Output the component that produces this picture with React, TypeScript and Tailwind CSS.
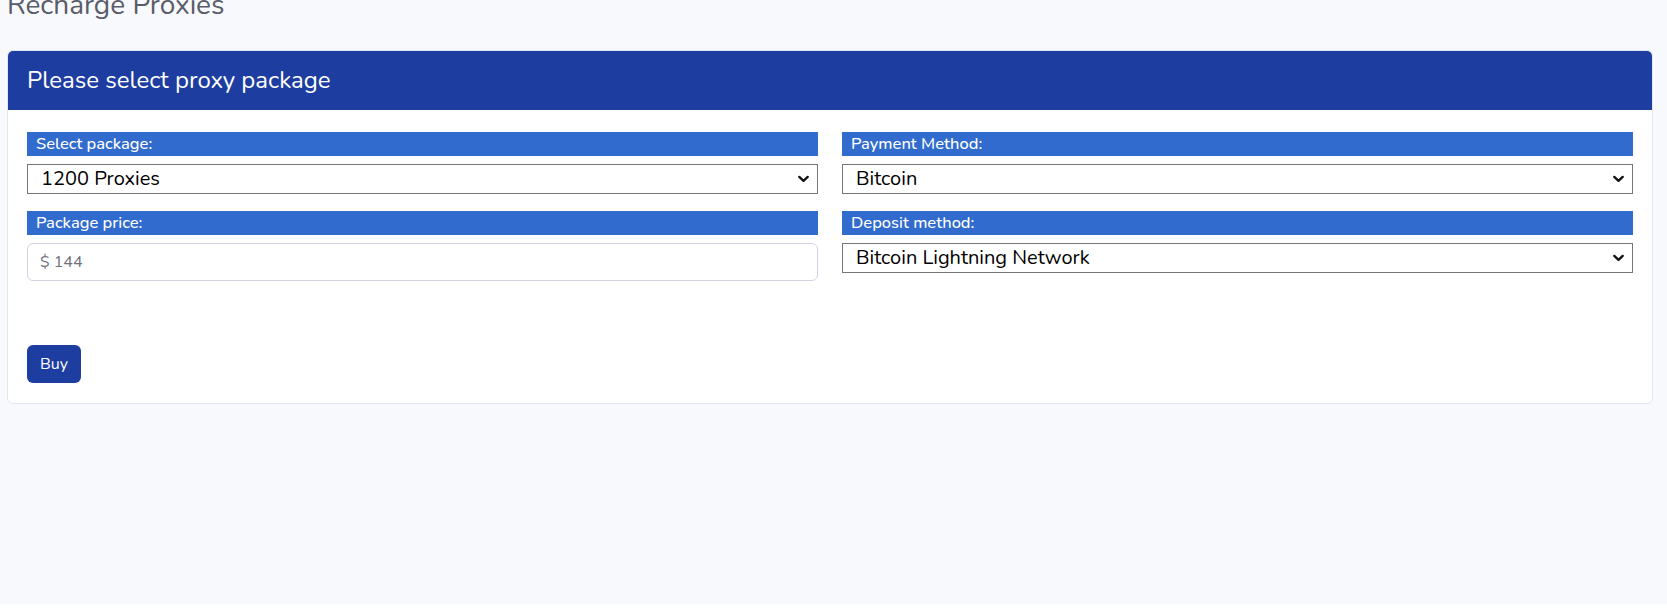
import React, { useState } from 'react';

const packages = ['100 Proxies', '300 Proxies', '600 Proxies', '1200 Proxies', '2500 Proxies'];
const payments = ['Bitcoin', 'Ethereum', 'USDT'];
const deposits = ['Bitcoin Lightning Network', 'Bitcoin On-chain'];

const Chevron: React.FC = () => (
  <svg
    className="pointer-events-none absolute right-[9px] top-1/2 -translate-y-1/2"
    width="11"
    height="7"
    viewBox="0 0 11 7"
    fill="none"
  >
    <path d="M1.3 1.3 5.5 5.3l4.2-4" stroke="#111" strokeWidth="2.3" strokeLinecap="round" strokeLinejoin="round" />
  </svg>
);

const FieldLabel: React.FC<{ children: React.ReactNode }> = ({ children }) => (
  <div className="h-[24px] bg-[#306bcd] px-[9px] text-[16.5px] font-medium leading-[24px] text-white">{children}</div>
);

const Select: React.FC<{ value: string; options: string[]; onChange: (v: string) => void }> = ({ value, options, onChange }) => (
  <div className="relative mt-[8px]">
    <select
      value={value}
      onChange={e => onChange(e.target.value)}
      className="block h-[30px] w-full appearance-none border border-[#767676] bg-white pl-[13px] pr-8 text-[20px] leading-[28px] text-black outline-none"
    >
      {options.map(o => (
        <option key={o}>{o}</option>
      ))}
    </select>
    <Chevron />
  </div>
);

export default function App() {
  const [pkg, setPkg] = useState('1200 Proxies');
  const [pay, setPay] = useState('Bitcoin');
  const [dep, setDep] = useState('Bitcoin Lightning Network');

  return (
    <div className="min-h-screen bg-[#f8f9fc] pl-[7px] pr-[14px] font-['Nunito','Open_Sans',sans-serif]">
      <h1 className="-mt-[11px] mb-[27px] text-[28px] font-normal leading-[1.2] text-[#5a5c69]">Recharge Proxies</h1>

      <div className="overflow-hidden rounded-[6px] border border-[#e3e6f0] bg-white">
        <div className="flex h-[59px] items-center bg-[#1e3da0] px-[19px] text-[24px] text-white">Please select proxy package</div>

        <div className="px-[19px] pb-[20px] pt-[22px]">
          <div className="grid grid-cols-2 gap-x-[24px]">
            <div>
              <FieldLabel>Select package:</FieldLabel>
              <Select value={pkg} options={packages} onChange={setPkg} />
              <div className="mt-[17px]">
                <FieldLabel>Package price:</FieldLabel>
                <input
                  readOnly
                  value="$ 144"
                  className="mt-[8px] block h-[38px] w-full rounded-[6px] border border-[#d1d3e2] bg-white px-[12px] text-[16px] text-[#6e707e] outline-none"
                />
              </div>
            </div>
            <div>
              <FieldLabel>Payment Method:</FieldLabel>
              <Select value={pay} options={payments} onChange={setPay} />
              <div className="mt-[17px]">
                <FieldLabel>Deposit method:</FieldLabel>
                <Select value={dep} options={deposits} onChange={setDep} />
              </div>
            </div>
          </div>

          <button className="mt-[64px] h-[38px] rounded-[6px] bg-[#1e3da0] px-[13px] text-[16px] text-white">Buy</button>
        </div>
      </div>
    </div>
  );
}
